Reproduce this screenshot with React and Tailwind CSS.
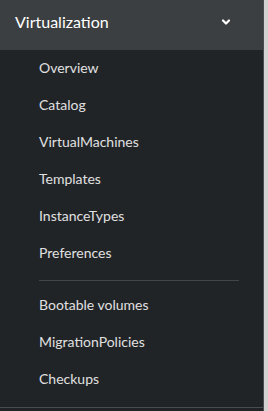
import { ChevronDown } from "lucide-react";

const groupOne = ["Overview", "Catalog", "VirtualMachines", "Templates", "InstanceTypes", "Preferences"];
const groupTwo = ["Bootable volumes", "MigrationPolicies", "Checkups"];

function NavItem({ label }) {
    return (
        <a href="#" className="flex h-[37px] items-center pb-[4px] pl-[39px] text-[14px] text-[#e0e0e0]">
            {label}
        </a>
    );
}

export default function App() {
    return (
        <div
            className="flex h-[411px] w-[268px] bg-[#d2d2d2]"
            style={{ fontFamily: 'Lato, "Open Sans", "Liberation Sans", sans-serif' }}
        >
            <nav className="flex w-[264px] flex-col border-r border-[#4a4d50] bg-[#212427]">
                <button className="flex h-[50px] items-center justify-between bg-[#3c3f42] pb-[6px] pl-[15px] pr-[31px] text-[16px] text-white">
                    <span>Virtualization</span>
                    <ChevronDown className="h-3 w-3" strokeWidth={4.5} />
                </button>
                <div className="flex flex-1 flex-col pt-px">
                    {groupOne.map((item) => (
                        <NavItem key={item} label={item} />
                    ))}
                    <div className="ml-[39px] mr-[24px] my-[7px] h-px bg-[#444548]" />
                    {groupTwo.map((item) => (
                        <NavItem key={item} label={item} />
                    ))}
                </div>
                <div className="h-px bg-[#4a4d50]" />
                <div className="h-[3px]" />
            </nav>
        </div>
    );
}
